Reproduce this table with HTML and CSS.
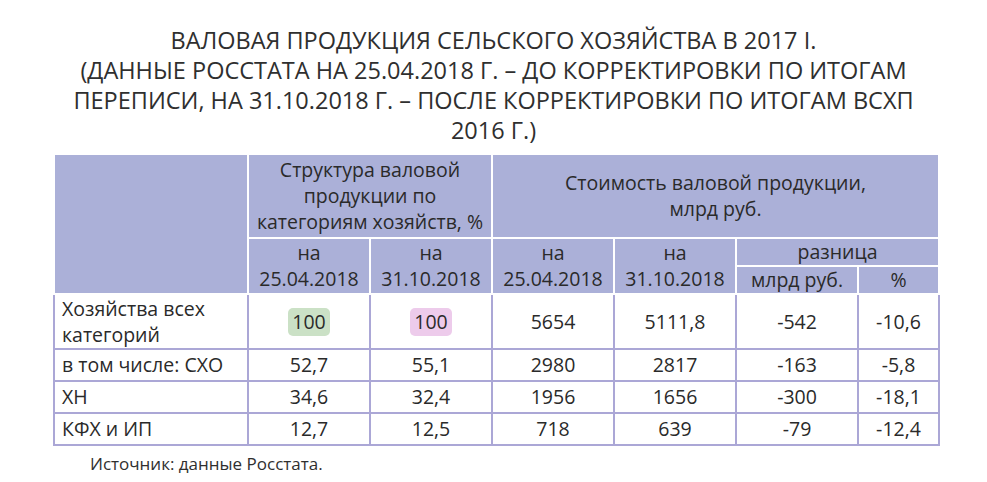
FILE: index.html
```html
<!DOCTYPE html>
<html lang="ru">
<head>
<meta charset="utf-8">
<title>Валовая продукция</title>
<link rel="stylesheet" href="styles.css">
</head>
<body>
<div class="page">
  <h1 class="title">ВАЛОВАЯ ПРОДУКЦИЯ СЕЛЬСКОГО ХОЗЯЙСТВА В 2017 І.<br>(ДАННЫЕ РОССТАТА НА 25.04.2018 Г. – ДО КОРРЕКТИРОВКИ ПО ИТОГАМ<br>ПЕРЕПИСИ, НА 31.10.2018 Г. – ПОСЛЕ КОРРЕКТИРОВКИ ПО ИТОГАМ ВСХП<br>2016 Г.)</h1>
  <table class="grid">
    <colgroup>
      <col class="c-name"><col class="c-num"><col class="c-num"><col class="c-num"><col class="c-num"><col class="c-num"><col class="c-last">
    </colgroup>
    <thead>
      <tr class="h1">
        <th rowspan="3"></th>
        <th colspan="2">Структура валовой<br>продукции по<br>категориям хозяйств, %</th>
        <th colspan="4">Стоимость валовой продукции,<br>млрд руб.</th>
      </tr>
      <tr class="h2">
        <th rowspan="2">на<br>25.04.2018</th>
        <th rowspan="2">на<br>31.10.2018</th>
        <th rowspan="2">на<br>25.04.2018</th>
        <th rowspan="2">на<br>31.10.2018</th>
        <th colspan="2">разница</th>
      </tr>
      <tr class="h3">
        <th>млрд руб.</th>
        <th>%</th>
      </tr>
    </thead>
    <tbody>
      <tr class="tall">
        <td class="name">Хозяйства всех<br>категорий</td>
        <td><span class="badge green">100</span></td>
        <td><span class="badge pink">100</span></td>
        <td>5654</td><td>5111,8</td><td>-542</td><td>-10,6</td>
      </tr>
      <tr>
        <td class="name">в том числе: СХО</td>
        <td>52,7</td><td>55,1</td><td>2980</td><td>2817</td><td>-163</td><td>-5,8</td>
      </tr>
      <tr>
        <td class="name">ХН</td>
        <td>34,6</td><td>32,4</td><td>1956</td><td>1656</td><td>-300</td><td>-18,1</td>
      </tr>
      <tr>
        <td class="name">КФХ и ИП</td>
        <td>12,7</td><td>12,5</td><td>718</td><td>639</td><td>-79</td><td>-12,4</td>
      </tr>
    </tbody>
  </table>
  <p class="source">Источник: данные Росстата.</p>
</div>
</body>
</html>
```
FILE: styles.css
```css
html, body {
  margin: 0;
  padding: 0;
  background: #ffffff;
}
body {
  font-family: "Open Sans", "Liberation Sans", sans-serif;
  color: #2a2a2a;
}
.page {
  width: 987px;
  height: 482px;
  overflow: hidden;
}
.title {
  margin: 0;
  padding-top: 25px;
  font-size: 23.5px;
  line-height: 30px;
  font-weight: 400;
  text-align: center;
  color: #2f2f2f;
}
.grid {
  margin: 8px 0 0 53px;
  width: 883px;
  table-layout: fixed;
  border-collapse: collapse;
  font-size: 19.5px;
}
.c-name { width: 194px; }
.c-num { width: 122px; }
.c-last { width: 81px; }
.grid th {
  background: #abb0d8;
  border: 2px solid #ffffff;
  font-weight: 400;
  text-align: center;
  vertical-align: middle;
  padding: 0 2px;
  line-height: 26px;
  white-space: nowrap;
}
.h1 th { height: 82px; }
.h2 th { height: 26px; }
.h3 th { height: 26px; }
.grid td {
  border: 2px solid #aba7d6;
  text-align: center;
  vertical-align: middle;
  padding: 0 4px;
  height: 30px;
  line-height: 26px;
  white-space: nowrap;
}
.grid tr.tall td { height: 53px; }
.grid td.name {
  text-align: left;
  padding-left: 7px;
}
.badge {
  display: inline-block;
  padding: 1px 4px;
  border-radius: 5px;
  line-height: 26px;
}
.green { background: #cbe1c6; }
.pink { background: #edcbeb; }
.source {
  margin: 7px 0 0 90px;
  font-size: 17px;
  line-height: 22px;
  color: #2f2f2f;
}
```
